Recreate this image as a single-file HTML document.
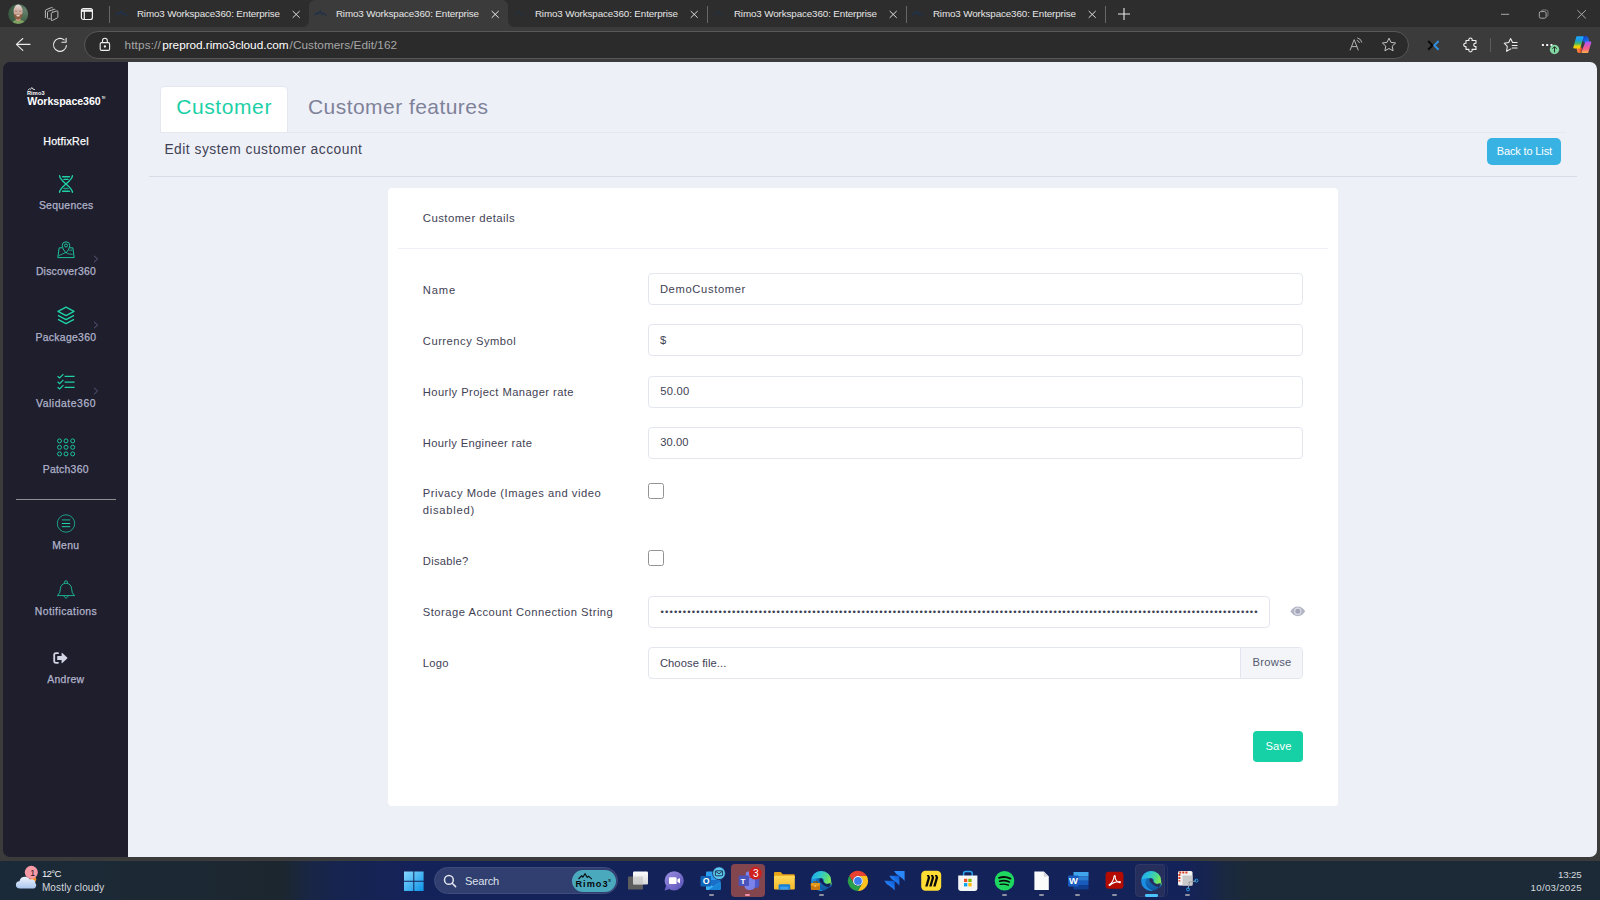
<!DOCTYPE html>
<html lang="en">
<head>
<meta charset="utf-8">
<title>Rimo3 Workspace360: Enterprise</title>
<style>
*{box-sizing:border-box;margin:0;padding:0}
html,body{width:1600px;height:900px;overflow:hidden;background:#3b3b3b;font-family:"Liberation Sans",sans-serif}
body{position:relative}
.a{position:absolute}
.t{position:absolute;white-space:nowrap;line-height:normal;font-weight:400}
svg{position:absolute;overflow:visible}
/* ---------- browser chrome ---------- */
#tabstrip{left:0;top:0;width:1600px;height:27px;background:#2d2d2d}
#acttab{left:309px;top:0;width:199px;height:28px;background:#3b3b3b;border-radius:6px 6px 0 0}
.tabsep{width:1px;height:17px;top:6px;background:#686868}
#urlbar{left:84px;top:31px;width:1325px;height:28px;border-radius:14px;background:#2b2b2b;border:1px solid #585858}
.tabt{color:#e6e6e6}
/* ---------- page ---------- */
#page{left:3px;top:62px;width:1594px;height:795px}
#main{left:125px;top:0;width:1469px;height:795px;background:#eef0f8;border-radius:0 7px 7px 0}
#side{left:0;top:0;width:125px;height:795px;background:#1e1e2d;border-radius:7px 0 0 7px}
.sl{color:#b1b3ca;-webkit-text-stroke:.25px #b1b3ca}
#hotfix{-webkit-text-stroke:.25px #fff}
#card{left:385px;top:126px;width:950px;height:618px;background:#fff;border-radius:4px}
.lbl{color:#3f4254}
.inp{position:absolute;left:648px;width:655px;height:32px;border:1px solid #e4e6ef;border-radius:4px;background:#fff;color:#3f4254;font-family:"Liberation Sans",sans-serif;outline:none}
.cb{position:absolute;left:648px;width:16.4px;height:16.4px;border:1px solid #939393;border-radius:2.5px;background:#fff;appearance:none;-webkit-appearance:none;margin:0}
/* ---------- taskbar ---------- */
#taskbar{left:0;top:861px;width:1600px;height:39px;background:linear-gradient(90deg,#1b2a39 0,#1c2934 10%,#1c262f 17.6%,#192645 19.4%,#16244f 21%,#14225a 26%,#14225a 74%,#16244f 75.4%,#1a2840 76.6%,#1c2a38 78%,#1c2a38 100%)}
.dot{position:absolute;top:893.5px;width:5px;height:2.4px;border-radius:1.2px;background:#8b90a3}
/* fitted text */
#tab1{left:136.90px;top:8.00px;font-size:9.8px;letter-spacing:-0.108px}
#tab2{left:335.90px;top:8.00px;font-size:9.8px;letter-spacing:-0.108px}
#tab3{left:534.90px;top:8.00px;font-size:9.8px;letter-spacing:-0.108px}
#tab4{left:733.90px;top:8.00px;font-size:9.8px;letter-spacing:-0.108px}
#tab5{left:932.90px;top:8.00px;font-size:9.8px;letter-spacing:-0.108px}
#url_a{left:124.60px;top:38.30px;font-size:11.8px;letter-spacing:0.096px}
#url_b{left:162.20px;top:38.30px;font-size:11.8px;letter-spacing:-0.037px}
#url_c{left:289.60px;top:38.30px;font-size:11.8px;letter-spacing:0.033px}
#logo_r{left:26.90px;top:90.20px;font-size:5.6px;letter-spacing:0.179px}
#logo_w{left:27.20px;top:95.30px;font-size:10.6px;letter-spacing:-0.047px}
#logo_tm{left:101.60px;top:95.60px;font-size:3.4px;letter-spacing:-1.271px}
#hotfix{left:43.20px;top:134.70px;font-size:10.7px;letter-spacing:0.252px}
#s_seq{left:38.90px;top:200.00px;font-size:10.4px;letter-spacing:0.288px}
#s_dis{left:35.90px;top:266.00px;font-size:10.4px;letter-spacing:0.213px}
#s_pkg{left:35.50px;top:332.00px;font-size:10.4px;letter-spacing:0.312px}
#s_val{left:36.00px;top:398.00px;font-size:10.4px;letter-spacing:0.536px}
#s_pat{left:42.70px;top:464.00px;font-size:10.4px;letter-spacing:0.267px}
#s_menu{left:52.20px;top:540.00px;font-size:10.4px;letter-spacing:0.262px}
#s_not{left:34.80px;top:605.80px;font-size:10.4px;letter-spacing:0.450px}
#s_and{left:47.20px;top:674.00px;font-size:10.4px;letter-spacing:0.335px}
#tb_cust{left:176.20px;top:94.80px;font-size:21px;letter-spacing:0.596px}
#tb_feat{left:308.00px;top:94.80px;font-size:21px;letter-spacing:0.448px}
#sub{left:164.40px;top:141.60px;font-size:13.8px;letter-spacing:0.500px}
#t_back{left:1496.80px;top:145.40px;font-size:11px;letter-spacing:-0.146px}
#c_title{left:422.80px;top:211.60px;font-size:11.4px;letter-spacing:0.429px}
#l_name{left:422.80px;top:283.60px;font-size:11.2px;letter-spacing:0.860px}
#l_cur{left:422.80px;top:334.60px;font-size:11.2px;letter-spacing:0.514px}
#l_pm{left:422.80px;top:385.50px;font-size:11.2px;letter-spacing:0.416px}
#l_eng{left:422.80px;top:436.50px;font-size:11.2px;letter-spacing:0.343px}
#l_prv1{left:422.80px;top:487.10px;font-size:11.2px;letter-spacing:0.514px}
#l_prv2{left:422.80px;top:503.60px;font-size:11.2px;letter-spacing:0.741px}
#l_dis{left:422.80px;top:555.00px;font-size:11.2px;letter-spacing:0.284px}
#l_sto{left:422.80px;top:605.80px;font-size:11.2px;letter-spacing:0.496px}
#l_logo{left:422.80px;top:656.50px;font-size:11.2px;letter-spacing:0.278px}
#t_choose{left:659.90px;top:656.50px;font-size:11.2px;letter-spacing:0.086px}
#t_browse{left:1252.60px;top:656.40px;font-size:11.2px;letter-spacing:0.264px}
#t_save{left:1265.40px;top:740.20px;font-size:11.2px;letter-spacing:0.207px}
#pw{left:660.50px;top:605.66px;font-size:9.5px;letter-spacing:1.139px}
#w_temp{left:41.90px;top:868.40px;font-size:9.6px;letter-spacing:-0.669px}
#w_desc{left:41.90px;top:881.70px;font-size:10px;letter-spacing:0.152px}
#tb_search{left:465.10px;top:875.20px;font-size:11.1px;letter-spacing:-0.196px}
#tb_rimo{left:575.50px;top:879.10px;font-size:9.2px;letter-spacing:0.983px}
#w_one{left:30.20px;top:867.60px;font-size:8.8px;letter-spacing:0.000px}
#tb_tm{left:608.20px;top:879.40px;font-size:2.8px;letter-spacing:-1.508px}
#ol_o{left:702.70px;top:875.90px;font-size:8.8px;letter-spacing:0.000px}
#tm_t{left:740.40px;top:876.70px;font-size:8px;letter-spacing:0.000px}
#tm_3{left:753.10px;top:867.80px;font-size:10.2px;letter-spacing:0.000px}
#wd_w{left:1068.90px;top:875.10px;font-size:9.4px;letter-spacing:0.000px}
#clock{left:1557.90px;top:868.50px;font-size:9.7px;letter-spacing:-0.139px}
#date{left:1530.60px;top:881.80px;font-size:9.7px;letter-spacing:0.278px}
#i_name{padding:0 0 1px 10.90px;font-size:11.2px;letter-spacing:0.645px}
#i_cur{padding:0 0 1px 10.90px;font-size:11.2px;letter-spacing:0.000px}
#i_pm{padding:0 0 1px 11.20px;font-size:11.2px;letter-spacing:0.256px}
#i_eng{padding:0 0 1px 11.20px;font-size:11.2px;letter-spacing:0.081px}
</style>
</head>
<body>

<!-- ================= BROWSER CHROME ================= -->
<div class="a" id="tabstrip"></div>
<div class="a" id="acttab"></div>
<!-- inverse corners of active tab -->
<svg style="left:303px;top:21px" width="6" height="6" viewBox="0 0 6 6"><path d="M6 0V6H0A6 6 0 0 0 6 0Z" fill="#3b3b3b"/></svg>
<svg style="left:508px;top:21px" width="6" height="6" viewBox="0 0 6 6"><path d="M0 0V6H6A6 6 0 0 1 0 0Z" fill="#3b3b3b"/></svg>

<!-- avatar -->
<svg style="left:8px;top:4px" width="21" height="21" viewBox="0 0 21 21">
 <defs><clipPath id="avc"><circle cx="10.2" cy="10" r="10"/></clipPath>
 <radialGradient id="avg" cx=".8" cy=".3" r=".9"><stop offset="0" stop-color="#64816c"/><stop offset=".6" stop-color="#416248"/><stop offset="1" stop-color="#3a5a42"/></radialGradient>
 <linearGradient id="avh" x1="0" y1="0" x2="0" y2="1"><stop offset="0" stop-color="#e2dadb"/><stop offset=".4" stop-color="#d2b2a6"/><stop offset="1" stop-color="#c49b88"/></linearGradient>
 <filter id="avb" x="-10%" y="-10%" width="120%" height="120%"><feGaussianBlur stdDeviation=".45"/></filter></defs>
 <g clip-path="url(#avc)"><rect width="21" height="21" fill="url(#avg)"/>
 <g filter="url(#avb)">
  <rect x="7.8" y="13" width="4.8" height="5" fill="#c0957f"/>
  <path d="M3.8 21Q4.8 16 8 16.2L10.2 17.6 12.6 16.2Q16.8 16 18 21Z" fill="#7fa260"/>
  <ellipse cx="10.1" cy="7.3" rx="4.5" ry="6.7" fill="url(#avh)"/>
  <path d="M5.7 9.4Q7 11.2 10.1 10.4Q13.2 11.2 14.5 9.4Q14.6 14.6 10.1 15.4Q5.6 14.6 5.7 9.4Z" fill="#8c5b41"/>
  <ellipse cx="10.1" cy="11.7" rx="1.9" ry=".8" fill="#efe2dc"/>
  <path d="M6.8 7.2H9.2M11 7.2H13.4" stroke="#8a6a5e" stroke-width=".7"/>
 </g></g>
</svg>
<!-- workspaces icon -->
<svg style="left:44px;top:6px" width="16" height="16" viewBox="0 0 16 16" fill="none" stroke="#b9b9b9" stroke-width="1" stroke-linecap="round">
 <path d="M8.4 6.3 13 4.9Q13.9 4.7 13.9 5.6V11Q13.9 11.6 13.3 11.9L8.3 14.5Q7.3 14.9 7.3 13.9V7.5Q7.3 6.6 8.4 6.3Z"/>
 <path d="M6.2 12.8H4.6Q3.5 12.8 3.5 11.7V6.4Q3.5 5.5 4.5 5.2L10.4 3.3Q11 3.2 11.2 3.7"/>
 <path d="M1.4 11.6V4.8Q1.4 3.9 2.3 3.6L7.7 1.5Q8.5 1.3 8.6 2"/>
</svg>
<!-- vertical tabs icon -->
<svg style="left:80px;top:7px" width="14" height="14" viewBox="0 0 14 14" fill="none" stroke="#f2f2f2" stroke-width="1.2">
 <rect x="1.4" y="1.5" width="11" height="11" rx="2"/>
 <path d="M1.4 3.6H12.4" stroke-width="2.4"/>
 <path d="M4.3 4V12.5"/>
</svg>
<div class="a tabsep" style="left:109px"></div>

<!-- tab 1 -->
<svg class="fav" style="left:115px;top:10px" width="13" height="7" viewBox="0 0 13 7" fill="none" stroke="#1f3350" stroke-width="1.1"><path d="M.5 5.5 3 2.8 4.2 4 6.2 1 8 4.6 9.6 3.2 12.5 5.8"/></svg>
<div class="t tabt" id="tab1">Rimo3 Workspace360: Enterprise</div>
<svg style="left:292.4px;top:10px" width="9" height="9" viewBox="0 0 9 9" stroke="#dedede" stroke-width="1"><path d="M.7 1 7.7 7.8M7.7 1 .7 7.8"/></svg>
<!-- tab 2 (active) -->
<svg class="fav" style="left:314px;top:10px" width="13" height="7" viewBox="0 0 13 7" fill="none" stroke="#1d2f4b" stroke-width="1.1"><path d="M.5 5.5 3 2.8 4.2 4 6.2 1 8 4.6 9.6 3.2 12.5 5.8"/></svg>
<div class="t tabt" id="tab2">Rimo3 Workspace360: Enterprise</div>
<svg style="left:491.4px;top:10px" width="9" height="9" viewBox="0 0 9 9" stroke="#ececec" stroke-width="1"><path d="M.7 1 7.7 7.8M7.7 1 .7 7.8"/></svg>
<!-- tab 3 -->
<svg class="fav" style="left:513px;top:10px" width="13" height="7" viewBox="0 0 13 7" fill="none" stroke="#262f3c" stroke-width="1.1"><path d="M.5 5.5 3 2.8 4.2 4 6.2 1 8 4.6 9.6 3.2 12.5 5.8"/></svg>
<div class="t tabt" id="tab3">Rimo3 Workspace360: Enterprise</div>
<svg style="left:690.4px;top:10px" width="9" height="9" viewBox="0 0 9 9" stroke="#dedede" stroke-width="1"><path d="M.7 1 7.7 7.8M7.7 1 .7 7.8"/></svg>
<div class="a tabsep" style="left:707px"></div>
<!-- tab 4 -->
<svg class="fav" style="left:712px;top:10px" width="13" height="7" viewBox="0 0 13 7" fill="none" stroke="#262f3c" stroke-width="1.1"><path d="M.5 5.5 3 2.8 4.2 4 6.2 1 8 4.6 9.6 3.2 12.5 5.8"/></svg>
<div class="t tabt" id="tab4">Rimo3 Workspace360: Enterprise</div>
<svg style="left:889.4px;top:10px" width="9" height="9" viewBox="0 0 9 9" stroke="#dedede" stroke-width="1"><path d="M.7 1 7.7 7.8M7.7 1 .7 7.8"/></svg>
<div class="a tabsep" style="left:906px"></div>
<!-- tab 5 -->
<svg class="fav" style="left:911px;top:10px" width="13" height="7" viewBox="0 0 13 7" fill="none" stroke="#1f3350" stroke-width="1.1"><path d="M.5 5.5 3 2.8 4.2 4 6.2 1 8 4.6 9.6 3.2 12.5 5.8"/></svg>
<div class="t tabt" id="tab5">Rimo3 Workspace360: Enterprise</div>
<svg style="left:1088.4px;top:10px" width="9" height="9" viewBox="0 0 9 9" stroke="#dedede" stroke-width="1"><path d="M.7 1 7.7 7.8M7.7 1 .7 7.8"/></svg>
<div class="a tabsep" style="left:1105px"></div>
<!-- new tab + -->
<svg style="left:1117px;top:7px" width="14" height="14" viewBox="0 0 14 14" stroke="#e8e8e8" stroke-width="1.1"><path d="M7 1V13M1 7H13"/></svg>
<!-- window controls -->
<svg style="left:1500px;top:9px" width="90" height="11" viewBox="0 0 90 11" fill="none" stroke="#a8a8a8" stroke-width="1">
 <path d="M1 5.3H9.2"/>
 <rect x="39.3" y="2.6" width="6.8" height="6.6" rx="1.6"/>
 <path d="M41 2.4Q41.4 1 43 1H46.2Q48 1 48 2.8V6Q48 7.4 46.6 7.8" stroke="#7c7c7c"/>
 <path d="M77.4 1.2 85.8 9.4M85.8 1.2 77.4 9.4"/>
</svg>

<!-- toolbar -->
<svg style="left:15px;top:38px" width="16" height="14" viewBox="0 0 16 14" fill="none" stroke="#ececec" stroke-width="1.1" stroke-linecap="round" stroke-linejoin="round"><path d="M15 6.4H1.5M7.8 .5 1.4 6.4 7.8 12.3"/></svg>
<svg style="left:52px;top:36px" width="16" height="17" viewBox="0 0 16 17" fill="none" stroke="#ececec" stroke-width="1.1" stroke-linecap="round" stroke-linejoin="round"><path d="M14.47 9.47A6.5 6.5 0 1 1 12.18 3.92"/><path d="M14.1 2.2V6.3H9.9"/></svg>
<div class="a" id="urlbar"></div>
<svg style="left:99px;top:37px" width="12" height="15" viewBox="0 0 12 15" fill="none" stroke="#f0f0f0" stroke-width="1.1"><rect x="1.2" y="5.6" width="9.4" height="7.8" rx="1.4"/><path d="M3.5 5.6V3.7A2.4 2.4 0 0 1 8.3 3.7V5.6"/><circle cx="5.9" cy="9.5" r=".6" fill="#f0f0f0"/></svg>
<div class="t" id="url_a" style="color:#a6a6a6">https://</div><div class="t" id="url_b" style="color:#fff">preprod.rimo3cloud.com</div><div class="t" id="url_c" style="color:#a6a6a6">/Customers/Edit/162</div>
<!-- read aloud -->
<svg style="left:1349px;top:37px" width="15" height="14" viewBox="0 0 15 14" fill="none" stroke="#b2b2b2" stroke-width="1" stroke-linecap="round"><path d="M1.2 13 5.2 2.6 9.2 13M2.6 9.6H7.8"/><path d="M8.2 3.4A3 3 0 0 1 10.4 5.6M8.6 1A5.2 5.2 0 0 1 12.8 5.2"/></svg>
<!-- star -->
<svg style="left:1381px;top:37px" width="16" height="15" viewBox="0 0 16 15" fill="none" stroke="#c4c4c4" stroke-width="1" stroke-linejoin="round"><path d="M8 1.2 10 5.4 14.6 6 11.2 9.2 12.1 13.8 8 11.5 3.9 13.8 4.8 9.2 1.4 6 6 5.4Z"/></svg>
<!-- extension X -->
<svg style="left:1427px;top:40px" width="13" height="11" viewBox="0 0 13 11" fill="none" stroke-width="2"><path d="M1.2 1 5.4 5.4 1.2 9.8" stroke="#0a0a0a"/><path d="M11.6 1 7.4 5.4 11.6 9.8" stroke="#2f8fe2"/></svg>
<!-- puzzle -->
<svg style="left:1463px;top:37px" width="16" height="16" viewBox="0 0 16 16" fill="none" stroke="#f0f0f0" stroke-width="1.1" stroke-linejoin="round"><path d="M3 3.5H6A1.7 1.7 0 1 1 9 3.5H13V6.3A1.7 1.7 0 1 0 13 9.5V12.4H9A1.7 1.7 0 1 1 6 12.4H3V9.5A1.7 1.7 0 1 1 3 6.3Z"/></svg>
<div class="a" style="left:1490px;top:38px;width:1px;height:14px;background:#5c5c5c"></div>
<!-- favourites -->
<svg style="left:1503px;top:37px" width="16" height="16" viewBox="0 0 16 16" fill="none" stroke="#f0f0f0" stroke-width="1.05" stroke-linejoin="round" stroke-linecap="round"><path d="M14.1 5.5H9.6L7.6 1.6 5.7 5.4 1.2 6.2 4.3 9.3 3.6 14.2 7.8 11.9"/><path d="M9.2 8.5H14.1M9.2 10.9H14.1"/></svg>
<!-- more -->
<svg style="left:1541px;top:43px" width="12" height="4" viewBox="0 0 12 4" fill="#f4f4f4"><rect x=".9" y="1" width="2" height="2"/><rect x="5.2" y="1" width="2" height="2"/><rect x="9.5" y="1" width="2" height="2"/></svg>
<svg style="left:1549px;top:44px" width="11" height="11" viewBox="0 0 11 11"><circle cx="5.5" cy="5.5" r="4.7" fill="#82d4a0"/><path d="M5.5 8.4V3M3.4 4.8 5.5 2.7 7.6 4.8" fill="none" stroke="#1f3528" stroke-width="1"/></svg>
<!-- copilot -->
<svg style="left:1572px;top:35px" width="21" height="19" viewBox="0 0 21 19">
 <defs>
  <linearGradient id="cpa" x1="0" y1="0" x2="0" y2="1"><stop offset="0" stop-color="#1ba6f7"/><stop offset=".3" stop-color="#1b9ee4"/><stop offset=".6" stop-color="#3cb86a"/><stop offset=".9" stop-color="#f2d108"/><stop offset="1" stop-color="#f7cf06"/></linearGradient>
  <linearGradient id="cpb" x1="0" y1="0" x2="0" y2="1"><stop offset="0" stop-color="#ae58f3"/><stop offset=".45" stop-color="#e9579f"/><stop offset=".75" stop-color="#f6697c"/><stop offset="1" stop-color="#ffa751"/></linearGradient>
  <linearGradient id="cpc" x1="0" y1="0" x2="1" y2="1"><stop offset="0" stop-color="#0d3fd0"/><stop offset="1" stop-color="#1f78e6"/></linearGradient>
  <linearGradient id="cpd" x1="0" y1="0" x2="1" y2="0"><stop offset="0" stop-color="#ff8a3e"/><stop offset="1" stop-color="#ee4a26"/></linearGradient>
 </defs>
 <path d="M10.5 2H14.2Q15.3 2.1 15.7 3.2L16.6 6.9H12.4Z" fill="url(#cpc)" stroke="url(#cpc)" stroke-width="1.4" stroke-linejoin="round"/>
 <path d="M5.4 13.3H9.3L8.2 17.2H7Q6 17 5.8 16Z" fill="url(#cpd)" stroke="url(#cpd)" stroke-width="1.4" stroke-linejoin="round"/>
 <path d="M5.2 2.1H10.7L7.5 12.5H2.2Z" fill="url(#cpa)" stroke="url(#cpa)" stroke-width="1.8" stroke-linejoin="round"/>
 <path d="M14.2 7.4H18.4L15.5 17.1H10.3Z" fill="url(#cpb)" stroke="url(#cpb)" stroke-width="1.8" stroke-linejoin="round"/>
</svg>

<!-- ================= PAGE ================= -->
<div class="a" id="page">
 <div class="a" id="main"></div>
 <div class="a" id="side"></div>
 <div class="a" style="left:157px;top:24.3px;width:127.5px;height:46.2px;background:#fff;border:.8px solid #e5e7f0;border-bottom:0;border-radius:5px 5px 0 0"></div>
 <div class="a" style="left:157px;top:70px;width:1406px;height:1px;background:#e6e8f1"></div>
 <div class="a" style="left:146px;top:114px;width:1428px;height:1px;background:#d9dbe6"></div>
 <div class="a" id="card"></div>
 <div class="a" style="left:395px;top:186px;width:930px;height:1px;background:#eff1f6"></div>
</div>

<!-- sidebar content -->
<svg style="left:26px;top:86px" width="20" height="10" viewBox="0 0 20 10" fill="none" stroke="#fff" stroke-width=".8"><path d="M1.8 4.2 3.6 2.8 4.6 3.4 5.8 1.5 7 3.4 8 3 9 4"/></svg>
<div class="t" id="logo_r" style="color:#fff;font-weight:700">Rimo3</div>
<div class="t" id="logo_w" style="color:#fff;font-weight:700">Workspace360</div>
<div class="t" id="logo_tm" style="color:#fff">TM</div>
<div class="t" id="hotfix" style="color:#fff">HotfixRel</div>

<!-- sequences (dna) -->
<svg style="left:58px;top:175px" width="16" height="18" viewBox="0 0 16 18" fill="none" stroke="#1fd1a5" stroke-width="1.4" stroke-linecap="round">
 <path d="M1.6 .8C1.6 6.4 14.4 11.6 14.4 17.2"/><path d="M14.4 .8C14.4 6.4 1.6 11.6 1.6 17.2"/>
 <path d="M4.6 1.8H11.4M4.6 16.2H11.4" stroke-width="1.5"/><path d="M6 4.4H10" stroke-width="1.3"/><path d="M6 13.4H10" stroke="#199a80" stroke-width="1.5"/>
</svg>
<div class="t sl" id="s_seq">Sequences</div>
<!-- discover (map pin) -->
<svg style="left:57px;top:241px" width="18" height="18" viewBox="0 0 18 18" fill="none" stroke="#1cc29a" stroke-width="1" stroke-linejoin="round">
 <path d="M5.2 6.8H2.2L.8 16.6H17.2L15.8 6.8H12.8"/>
 <path d="M9 12.2Q5.2 7.6 5.2 4.6A3.8 3.8 0 0 1 12.8 4.6Q12.8 7.6 9 12.2Z"/><circle cx="9" cy="4.5" r="1.5"/>
 <path d="M1.6 14.8 8.4 11.6M9.8 12.6 15.6 13.4M12.4 9.4 15.2 9" stroke-width=".8"/>
</svg>
<div class="t sl" id="s_dis">Discover360</div>
<svg class="chev" style="left:93px;top:255.4px" width="6" height="8" viewBox="0 0 6 8" fill="none" stroke="#56587a" stroke-width="1"><path d="M1 .8 4.6 4 1 7.2"/></svg>
<!-- package (layers) -->
<svg style="left:57px;top:306px" width="18" height="19" viewBox="0 0 18 19" fill="none" stroke="#1fd1a5" stroke-width="1.4" stroke-linejoin="round">
 <path d="M9 1.2 17 5.4 9 9.6 1 5.4Z"/><path d="M1 9.4 9 13.6 17 9.4"/><path d="M1 13.4 9 17.6 17 13.4"/>
</svg>
<div class="t sl" id="s_pkg">Package360</div>
<svg class="chev" style="left:93px;top:321.4px" width="6" height="8" viewBox="0 0 6 8" fill="none" stroke="#56587a" stroke-width="1"><path d="M1 .8 4.6 4 1 7.2"/></svg>
<!-- validate (check list) -->
<svg style="left:57px;top:373px" width="18" height="18" viewBox="0 0 18 18" fill="none" stroke="#1fd1a5" stroke-width="1.2">
 <path d="M.6 3.2 2.6 5 6.4 1.2M7.6 3.4H17.6"/><path d="M.6 8.8 2.6 10.6 6.4 6.8M7.6 9.2H17.6"/><path d="M.6 14.2 2.6 16 6.4 12.2M7.6 14.4H17.6"/>
</svg>
<div class="t sl" id="s_val">Validate360</div>
<svg class="chev" style="left:93px;top:387.4px" width="6" height="8" viewBox="0 0 6 8" fill="none" stroke="#56587a" stroke-width="1"><path d="M1 .8 4.6 4 1 7.2"/></svg>
<!-- patch (grid of rings) -->
<svg style="left:56px;top:437px" width="20" height="20" viewBox="0 0 20 20" fill="none" stroke="#1cc29a" stroke-width="1">
 <circle cx="3.5" cy="3.9" r="2"/><circle cx="10" cy="3.9" r="2"/><circle cx="16.7" cy="3.9" r="2"/>
 <circle cx="3.5" cy="10.3" r="2"/><circle cx="10" cy="10.3" r="2"/><circle cx="16.7" cy="10.3" r="2"/>
 <circle cx="3.5" cy="16.9" r="2"/><circle cx="10" cy="16.9" r="2"/><circle cx="16.7" cy="16.9" r="2"/>
</svg>
<div class="t sl" id="s_pat">Patch360</div>
<div class="a" style="left:16px;top:498.5px;width:100px;height:1.4px;background:#8f8f8f"></div>
<!-- menu -->
<svg style="left:56px;top:514px" width="20" height="20" viewBox="0 0 20 20" fill="none" stroke="#1fd1a5"><circle cx="10" cy="9.5" r="8.7" stroke-width=".8" stroke="#1cc29a"/><path d="M5.8 5.9H14.2" stroke="#199a80" stroke-width="1.2"/><path d="M5.8 9.5H14.2M5.8 12.7H14.2" stroke-width="1"/></svg>
<div class="t sl" id="s_menu">Menu</div>
<!-- notifications (bell) -->
<svg style="left:56px;top:580px" width="20" height="20" viewBox="0 0 20 20" fill="none" stroke="#1cc29a" stroke-width=".9" stroke-linejoin="round">
 <path d="M1.4 15.6Q4.4 13.4 4.4 8.8A5.6 5.6 0 0 1 15.6 8.8Q15.6 13.4 18.6 15.6Z"/><path d="M8.4 3.2V2.4A1.6 1.6 0 0 1 11.6 2.4V3.2"/><path d="M7.6 15.8 10 18.4 12.4 15.8"/>
</svg>
<div class="t sl" id="s_not">Notifications</div>
<!-- sign-out -->
<svg style="left:53px;top:652px" width="15" height="12" viewBox="0 0 15 12"><path d="M5 1.2H3Q1.2 1.2 1.2 3V9Q1.2 10.8 3 10.8H5" fill="none" stroke="#d3d4e4" stroke-width="1.8" stroke-linecap="round"/><path d="M4.8 4H8.6V1.3Q8.6 .5 9.3 1.1L14.2 5.5Q14.7 6 14.2 6.5L9.3 10.9Q8.6 11.5 8.6 10.7V8H4.8Q4.2 8 4.2 7.4V4.6Q4.2 4 4.8 4Z" fill="#d3d4e4"/></svg>
<div class="t sl" id="s_and">Andrew</div>

<!-- header / tabs -->
<a class="t" id="tb_cust" style="color:#1bd0a6">Customer</a>
<a class="t" id="tb_feat" style="color:#7e8299">Customer features</a>
<div class="t" id="sub" style="color:#3f4254">Edit system customer account</div>
<a class="a" id="btn_back" style="left:1487px;top:138px;width:74px;height:27px;background:#38b2e2;border-radius:5px"></a>
<div class="t" id="t_back" style="color:#fff">Back to List</div>

<!-- card -->
<div class="t lbl" id="c_title">Customer details</div>
<label class="t lbl" id="l_name">Name</label>
<input class="inp" id="i_name" style="top:273px" value="DemoCustomer">
<label class="t lbl" id="l_cur">Currency Symbol</label>
<input class="inp" id="i_cur" style="top:324px" value="$">
<label class="t lbl" id="l_pm">Hourly Project Manager rate</label>
<input class="inp" id="i_pm" style="top:375.5px" value="50.00">
<label class="t lbl" id="l_eng">Hourly Engineer rate</label>
<input class="inp" id="i_eng" style="top:426.5px" value="30.00">
<label class="t lbl" id="l_prv1">Privacy Mode (Images and video</label>
<label class="t lbl" id="l_prv2">disabled)</label>
<input type="checkbox" class="cb" style="top:483.1px">
<label class="t lbl" id="l_dis">Disable?</label>
<input type="checkbox" class="cb" style="top:550.1px">
<label class="t lbl" id="l_sto">Storage Account Connection String</label>
<div class="inp" style="top:595.5px;width:622px"></div>
<div class="t" id="pw" style="color:#3b3e52">••••••••••••••••••••••••••••••••••••••••••••••••••••••••••••••••••••••••••••••••••••••••••••••••••••••••••••••••••••••••••••••••••••••</div>
<svg style="left:1290px;top:606px" width="16" height="11" viewBox="0 0 16 11"><path d="M.4 5.3Q3.4 .4 7.8 .4T15.2 5.3Q12.2 10.2 7.8 10.2T.4 5.3Z" fill="#b1b4c5"/><circle cx="7.8" cy="5.3" r="3.7" fill="#fff" opacity=".55"/><circle cx="7.8" cy="5.3" r="2.5" fill="#a3a6b9"/></svg>
<label class="t lbl" id="l_logo">Logo</label>
<div class="inp" style="top:647px"></div>
<div class="a" style="left:1240px;top:648px;width:62px;height:30px;background:#f3f5f9;border-left:1px solid #e4e6ef;border-radius:0 3px 3px 0"></div>
<div class="t lbl" id="t_choose">Choose file...</div>
<div class="t" id="t_browse" style="color:#565a70">Browse</div>
<button class="a" id="btn_save" style="left:1253px;top:730.5px;width:50px;height:31.5px;background:#16d1a5;border:0;border-radius:4px"></button>
<div class="t" id="t_save" style="color:#fff">Save</div>

<!-- ================= TASKBAR ================= -->
<div class="a" id="taskbar"></div>
<!-- weather widget -->
<svg style="left:15px;top:866px" width="24" height="24" viewBox="0 0 24 24">
 <defs><linearGradient id="cl" x1="0" y1="0" x2="0" y2="1"><stop offset="0" stop-color="#eef3fb"/><stop offset="1" stop-color="#a9c6ee"/></linearGradient></defs>
 <circle cx="18.2" cy="13.2" r="3" fill="#f28a1c"/>
 <path d="M5 22.6Q.9 22.6 .9 18.8Q.9 15.6 4.4 15.2Q5.6 10.6 10.4 10.8Q13.6 10.8 15.2 13.6Q17.8 12.4 19.6 14.6Q20.6 15.6 20.3 17Q21.4 18.2 21.2 19.8Q20.8 22.6 17.6 22.6Z" fill="url(#cl)"/>
 <circle cx="16.3" cy="6.3" r="6.5" fill="#f79aa5"/>
</svg>
<div class="t" id="w_one" style="color:#2a1418">1</div>
<div class="t" id="w_temp" style="color:#f2f4f7">12°C</div>
<div class="t" id="w_desc" style="color:#d4d8de">Mostly cloudy</div>

<!-- start -->
<svg style="left:404px;top:871px" width="20" height="20" viewBox="0 0 20 20">
 <defs><linearGradient id="wl" x1="0" y1="0" x2="1" y2="1"><stop offset="0" stop-color="#86d8ff"/><stop offset="1" stop-color="#0c93e6"/></linearGradient></defs>
 <path d="M0 .5H9.3V9.8H0ZM10.3 .5H19.6V9.8H10.3ZM0 10.8H9.3V20H0ZM10.3 10.8H19.6V20H10.3Z" fill="url(#wl)"/>
</svg>
<!-- search pill -->
<div class="a" style="left:434px;top:867px;width:184px;height:27px;border-radius:13.5px;background:#313e70;border:1px solid #3f4b7c"></div>
<svg style="left:443px;top:874px" width="14" height="14" viewBox="0 0 14 14" fill="none" stroke="#e3e6ee" stroke-width="1.5" stroke-linecap="round"><circle cx="5.9" cy="5.9" r="4.4"/><path d="M9.2 9.2 12.6 12.6"/></svg>
<div class="t" id="tb_search" style="color:#dde0ea">Search</div>
<div class="a" style="left:572px;top:870px;width:43.5px;height:22px;border-radius:11px;background:#4ba9be"></div>
<svg style="left:578px;top:873px" width="15" height="7" viewBox="0 0 15 7" fill="none" stroke="#0b0d10" stroke-width="1.15"><path d="M.5 6 3.6 2.8 4.8 4 7 .8 9.2 4.4 10.6 3.2 13.8 6.2"/></svg>
<div class="t" id="tb_rimo" style="color:#07090c;font-weight:700">Rimo3</div>
<div class="t" id="tb_tm" style="color:#07090c">TM</div>

<!-- task view -->
<svg style="left:627px;top:870px" width="22" height="21" viewBox="0 0 22 21">
 <defs><linearGradient id="tv" x1="0" y1="0" x2="0" y2="1"><stop offset="0" stop-color="#fdfdfd"/><stop offset="1" stop-color="#d6d6d6"/></linearGradient></defs>
 <rect x="1" y="6.6" width="15" height="13" rx="1.2" fill="#5d5d5d"/><rect x="6" y="1.5" width="15" height="13" rx="1.2" fill="url(#tv)"/><rect x="6" y="6.6" width="10" height="7.9" fill="#bdbdbd" opacity=".55"/>
</svg>
<!-- chat -->
<svg style="left:663px;top:870px" width="22" height="22" viewBox="0 0 22 22">
 <defs><linearGradient id="ch" x1="0" y1="0" x2="1" y2="1"><stop offset="0" stop-color="#9a8fe0"/><stop offset="1" stop-color="#5a53b8"/></linearGradient></defs>
 <circle cx="11.2" cy="10.8" r="9.6" fill="url(#ch)"/><path d="M3.2 15 1.6 20.6 8 18.8Z" fill="#6a62c4"/>
 <rect x="6" y="7.3" width="7.6" height="6.8" rx="1.2" fill="#fff"/><path d="M14.4 9.6 17 7.9V13.5L14.4 11.8Z" fill="#fff"/>
</svg>
<!-- outlook -->
<svg style="left:699px;top:866px" width="28" height="26" viewBox="0 0 28 26">
 <path d="M7 10.5H21.5V23Q21.5 24 20.5 24H8Q7 24 7 23Z" fill="#1a6fc9"/>
 <path d="M7 6.5Q7 5.5 8 5.5H20.5Q21.5 5.5 21.5 6.5V14H7Z" fill="#2a9df0"/>
 <path d="M7 16 14.2 20.5 21.5 16V23Q21.5 24 20.5 24H8Q7 24 7 23Z" fill="#3cb4f4"/>
 <path d="M9 24 21.5 16.3V23Q21.5 24 20.5 24Z" fill="#1784d8"/>
 <rect x="1.5" y="10" width="10.5" height="10.5" rx="1" fill="#0f64b8"/>
 <circle cx="20" cy="7.2" r="6.4" fill="#5cc6f2" stroke="#14204f" stroke-width=".8"/>
 <rect x="16.4" y="4.8" width="7.2" height="5" rx=".8" fill="none" stroke="#0d1a2a" stroke-width=".8"/><path d="M16.6 5.2 20 7.8 23.4 5.2" fill="none" stroke="#0d1a2a" stroke-width=".8"/>
</svg>
<div class="t" id="ol_o" style="color:#fff;font-weight:700">O</div>
<div class="dot" style="left:708.5px"></div>
<!-- teams (highlighted) -->
<div class="a" style="left:731px;top:864px;width:33.5px;height:33px;border-radius:4px;background:#83464e"></div>
<svg style="left:737px;top:866px" width="26" height="26" viewBox="0 0 26 26">
 <circle cx="16.8" cy="9.2" r="3.6" fill="#7b83eb"/><circle cx="11.6" cy="8.4" r="3" fill="#7b83eb"/>
 <path d="M14 12H21.2Q22.2 12 22.2 13V18.5Q22.2 22 18.6 22T15 18.5Z" fill="#5059c9"/>
 <path d="M7.5 12H17Q18 12 18 13V19.5Q18 24 12.8 24T7.5 19.5Z" fill="#7b83eb"/>
 <rect x="1.6" y="9.6" width="10.4" height="10.4" rx="1" fill="#4b53bc"/>
 <circle cx="18.4" cy="7.2" r="6.4" fill="#cf2020"/>
</svg>
<div class="t" id="tm_t" style="color:#fff;font-weight:700">T</div>
<div class="t" id="tm_3" style="color:#fff">3</div>
<div class="dot" style="left:745px;background:#f390a6"></div>
<!-- explorer -->
<svg style="left:773px;top:870px" width="23" height="21" viewBox="0 0 23 21">
 <defs><linearGradient id="fo" x1="0" y1="0" x2="0" y2="1"><stop offset="0" stop-color="#ffd95a"/><stop offset="1" stop-color="#f7b928"/></linearGradient></defs>
 <path d="M1 3.2Q1 2 2.2 2H7.6L9.8 4.2H20.6Q21.8 4.2 21.8 5.4V8H1Z" fill="#e8a317"/>
 <path d="M1 7Q1 5.8 2.2 5.8H20.6Q21.8 5.8 21.8 7V18.3Q21.8 19.5 20.6 19.5H2.2Q1 19.5 1 18.3Z" fill="url(#fo)"/>
 <path d="M5.6 19.5V15.4Q5.6 14.2 6.8 14.2H16Q17.2 14.2 17.2 15.4V19.5Z" fill="#1a7fd4"/><path d="M7.4 19.5V16.6H15.4V19.5Z" fill="#3aa0f0"/>
</svg>
<!-- edge (work) -->
<svg style="left:810px;top:870px" width="22" height="22" viewBox="0 0 22 22">
 <use href="#edge"/>
 <rect x=".8" y="13" width="9.2" height="7" rx="1" fill="#c8780e"/><rect x=".8" y="13" width="9.2" height="3" rx="1" fill="#e59a1c"/><path d="M3.6 13V11.8H7.2V13" fill="none" stroke="#8a4f08" stroke-width="1"/><rect x="4.6" y="15.4" width="1.6" height="1.4" fill="#f7d070"/>
</svg>
<div class="dot" style="left:819px"></div>
<!-- chrome -->
<svg style="left:847px;top:870px" width="22" height="22" viewBox="0 0 22 22">
 <path d="M11 6L19.83 6A10.1 10.1 0 0 0 2.34 5.7L6.76 13.35A4.9 4.9 0 0 1 11 6Z" fill="#e8412f"/>
 <path d="M15.24 13.35L10.83 21A10.1 10.1 0 0 0 19.83 6L11 6A4.9 4.9 0 0 1 15.24 13.35Z" fill="#fcc31e"/>
 <path d="M6.76 13.35L2.34 5.7A10.1 10.1 0 0 0 10.83 21L15.24 13.35A4.9 4.9 0 0 1 6.76 13.35Z" fill="#2a9f49"/>
 <circle cx="11" cy="10.9" r="4.9" fill="#fff"/><circle cx="11" cy="10.9" r="3.9" fill="#3b7ded"/>
</svg>
<!-- jira -->
<svg style="left:884px;top:870px" width="22" height="22" viewBox="0 0 22 22">
 <defs><linearGradient id="jg" x1="1" y1="0" x2=".35" y2=".65"><stop offset="0" stop-color="#0a55cc"/><stop offset="1" stop-color="#2a88ff"/></linearGradient></defs>
 <path d="M10 1H20.6V11Q19 8.6 15.5 6.2Q12 4.6 10 1Z" fill="#2a88ff"/>
 <path d="M5.3 5.8H15.4V15.6Q13.8 13.2 10.4 11Q7 9.4 5.3 5.8Z" fill="url(#jg)"/>
 <path d="M.3 10.7H10.7V20.6Q9.1 18.2 5.6 15.9Q2.2 14.3 .3 10.7Z" fill="url(#jg)"/>
</svg>
<!-- miro -->
<svg style="left:921px;top:870px" width="21" height="21" viewBox="0 0 21 21">
 <rect x=".2" y=".8" width="20" height="20" rx="4.2" fill="#ffdd33"/>
 <path d="M5.8 5H8L9.2 7.6 6.6 16.6H4.2L6.8 7.6ZM9.8 5H12L13.2 7.6 10.6 16.6H8.2L10.8 7.6ZM13.8 5H16L17.2 7.6 14.6 16.6H12.2L14.8 7.6Z" fill="#0b0b0b"/>
</svg>
<!-- store -->
<svg style="left:957px;top:869px" width="22" height="23" viewBox="0 0 22 23">
 <path d="M6.6 7V4.6Q6.6 2.6 8.6 2.6H13.2Q15.2 2.6 15.2 4.6V7" fill="none" stroke="#29a4ee" stroke-width="1.5"/>
 <path d="M1.2 6.4H20.4V19.6Q20.4 22 18 22H3.6Q1.2 22 1.2 19.6Z" fill="#f4f5f7"/>
 <rect x="7" y="9.8" width="3.3" height="3.3" fill="#f25022"/><rect x="11.3" y="9.8" width="3.3" height="3.3" fill="#7fba00"/><rect x="7" y="14.1" width="3.3" height="3.3" fill="#00a4ef"/><rect x="11.3" y="14.1" width="3.3" height="3.3" fill="#ffb900"/>
</svg>
<!-- spotify -->
<svg style="left:994px;top:870px" width="22" height="22" viewBox="0 0 22 22">
 <circle cx="10.5" cy="10.8" r="9.8" fill="#1ed760"/>
 <path d="M5 7.8Q10.8 6 16.4 8.6" fill="none" stroke="#0a0a0a" stroke-width="1.9" stroke-linecap="round"/><path d="M5.6 11.2Q10.6 9.8 15.4 12" fill="none" stroke="#0a0a0a" stroke-width="1.6" stroke-linecap="round"/><path d="M6.2 14.4Q10.4 13.4 14.4 15.2" fill="none" stroke="#0a0a0a" stroke-width="1.3" stroke-linecap="round"/>
</svg>
<div class="dot" style="left:1002px"></div>
<!-- document -->
<svg style="left:1033px;top:870px" width="17" height="21" viewBox="0 0 17 21"><path d="M1.4 1.5H10.8L15.8 6.5V20H1.4Z" fill="#fbfbfb"/><path d="M10.8 1.5V6.5H15.8Z" fill="#cfd2d6"/></svg>
<div class="dot" style="left:1038.5px"></div>
<!-- word -->
<svg style="left:1067px;top:870px" width="23" height="21" viewBox="0 0 23 21">
 <rect x="6.5" y="2" width="15" height="4.5" fill="#41a5ee"/><rect x="6.5" y="6.5" width="15" height="4.3" fill="#2b7cd3"/><rect x="6.5" y="10.8" width="15" height="4.3" fill="#185abd"/><rect x="6.5" y="15.1" width="15" height="4.3" fill="#103f91"/>
 <rect x="1" y="5.5" width="10.5" height="11" rx="1" fill="#185abd"/>
</svg>
<div class="t" id="wd_w" style="color:#fff;font-weight:700">W</div>
<div class="dot" style="left:1075px"></div>
<!-- acrobat -->
<svg style="left:1105px;top:871px" width="19" height="18" viewBox="0 0 19 18">
 <rect x=".6" y=".8" width="17.8" height="17" rx="3.2" fill="#b30b00"/>
 <path d="M4.4 13.6C6.8 12.8 8.8 8.4 9 5.6C9.1 4.2 10.4 4.2 10.2 5.6C9.8 8.2 12.2 11.4 14.6 11.6C15.8 11.7 15.6 10.4 14.4 10.6C11.4 10.8 7 12.2 5.2 14C4.4 14.8 3.6 14 4.4 13.6Z" fill="none" stroke="#fff" stroke-width="1.1" stroke-linejoin="round"/>
</svg>
<div class="dot" style="left:1112px"></div>
<!-- edge (active) -->
<div class="a" style="left:1138px;top:864px;width:30px;height:33px;border-radius:4px;border:1px solid #262f5e"></div>
<div class="a" style="left:1134.5px;top:864px;width:30px;height:33px;border-radius:4px;background:#262f5c;border:1px solid #2e3866"></div>
<svg style="left:1140px;top:870px" width="22" height="22" viewBox="0 0 22 22">
 <defs>
  <linearGradient id="eg1" x1="0" y1="0" x2="1" y2=".35"><stop offset="0" stop-color="#1f9fe8"/><stop offset=".45" stop-color="#2cc3d6"/><stop offset=".8" stop-color="#4fd98a"/><stop offset="1" stop-color="#7be858"/></linearGradient>
  <linearGradient id="eg2" x1="0" y1="0" x2="0" y2="1"><stop offset="0" stop-color="#1a7fd0"/><stop offset="1" stop-color="#0f559f"/></linearGradient>
  <g id="edge">
   <clipPath id="egc"><path clip-rule="evenodd" d="M1.2 10.9A10 10 0 1 1 21.2 10.9A10 10 0 1 1 1.2 10.9ZM9.2 10.2A1.8 1.8 0 0 1 12.8 10Q13 12.4 15.4 13.4Q18.4 14.4 21.6 12.6L21.6 16.2L19.6 17.6Q15.5 16.8 13 14.7Q11 13.2 10.2 12Q9.3 11.2 9.2 10.2Z"/></clipPath>
   <g clip-path="url(#egc)">
    <rect x="1" y="0" width="21" height="22" fill="url(#eg2)"/>
    <path d="M1 11Q1.5 5.5 8.8 6.4Q5 9.2 5.6 13.6Q6.6 18.8 13.4 21H1Z" fill="#1b8de0"/>
    <path d="M1 9.8V0H22V14.6Q18.8 15 16 14Q13.4 12.8 13.8 10.6Q13.8 8.2 10.8 8Q5.6 7.6 1 9.8Z" fill="url(#eg1)"/>
   </g>
  </g>
 </defs>
 <use href="#edge"/>
</svg>
<div class="a" style="left:1144.5px;top:894px;width:13.5px;height:2.6px;border-radius:1.3px;background:#4cc2ff"></div>
<!-- snipping tool -->
<svg style="left:1177px;top:870px" width="22" height="22" viewBox="0 0 22 22">
 <rect x="1" y="1" width="14.5" height="14.5" rx="1.5" fill="#f3f3f3"/><rect x="5.5" y="5.5" width="10" height="10" fill="#c9c9c9"/>
 <path d="M2.2 2.6H11.5M2.4 4V11.6" fill="none" stroke="#d83b1e" stroke-width="2" stroke-dasharray="2 1.1"/>
 <path d="M11.5 12.5 19 10.8M12.5 11.5 11.2 18.8" fill="none" stroke="#9aa0a8" stroke-width="1"/>
 <circle cx="19.4" cy="10.6" r="1.5" fill="none" stroke="#2aa3e8" stroke-width="1"/><circle cx="11" cy="19.4" r="1.5" fill="none" stroke="#2aa3e8" stroke-width="1"/>
</svg>
<div class="dot" style="left:1185px"></div>
<!-- clock -->
<div class="t" id="clock" style="color:#d7dade">13:25</div>
<div class="t" id="date" style="color:#d7dade">10/03/2025</div>


</body>
</html>
